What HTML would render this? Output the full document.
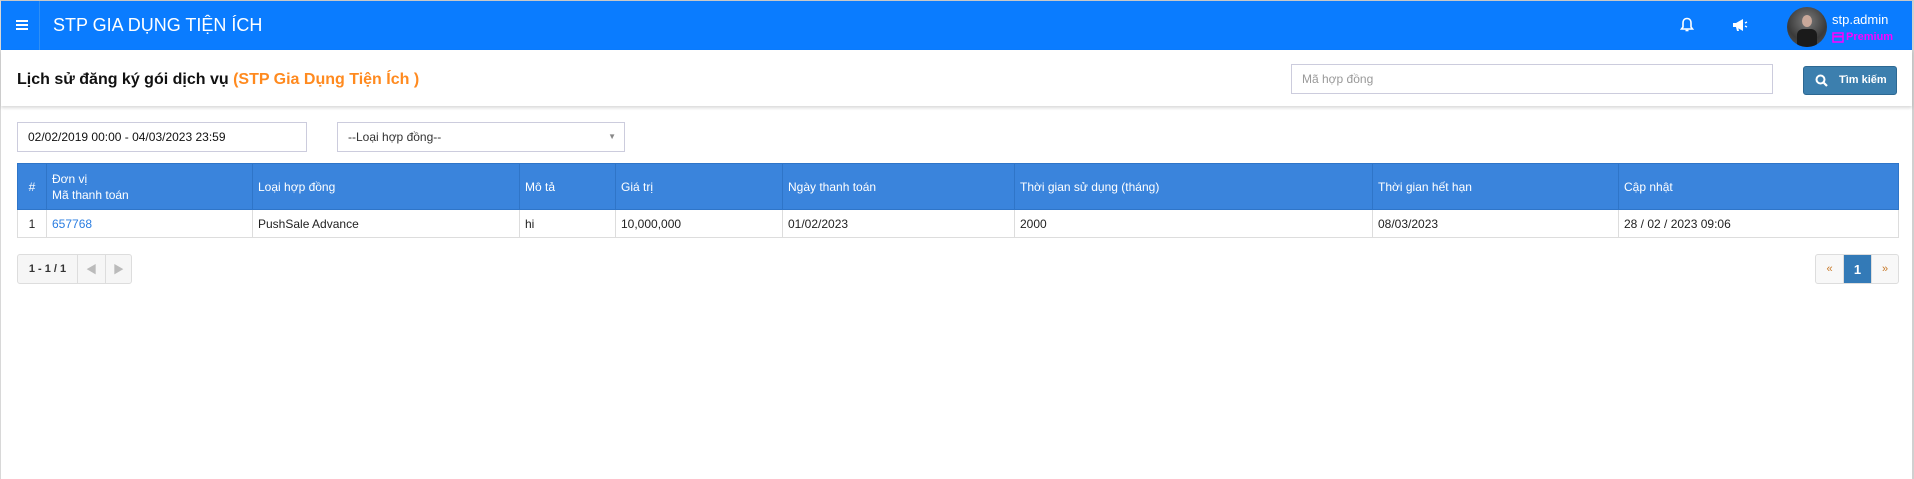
<!DOCTYPE html>
<html><head><meta charset="utf-8">
<style>
*{box-sizing:border-box;margin:0;padding:0}
body{width:1914px;height:479px;overflow:hidden;background:#fff;font-family:"Liberation Sans","Noto Sans CJK SC",sans-serif;font-size:12px;color:#222;position:relative;border-left:1px solid #d8d8d8;border-right:2px solid #d0d0d0;border-top:1px solid #c8c8c8}
.hdr{position:absolute;left:0;top:0;width:100%;height:49px;background:#0a7cff;color:#fff}
.abs{position:absolute}
.title{left:52px;top:14px;font-size:18px;color:#fff}
.div{left:38px;top:0;width:1px;height:49px;background:#2f8ff5}
.sec{position:absolute;left:0;top:49px;width:100%;height:56px;background:#fff;box-shadow:0 2px 3px rgba(0,0,0,.15)}
.inp{position:absolute;border:1px solid #ccd;background:#fff;font-size:12px;padding-left:10px;line-height:28px}
table{position:absolute;left:16px;top:162px;width:1882px;border-collapse:collapse;font-size:12px}
th{background:#3a84dc;color:#fff;font-weight:normal;text-align:left;height:46px;padding:0 5px;border:1px solid #2f75c8;line-height:16px}
td{height:28px;padding:0 5px;border:1px solid #ddd}
.pg{position:absolute;border:1px solid #ddd;border-radius:3px;background:#f6f6f6;height:30px;display:flex;font-size:11px}
.pg div{display:flex;align-items:center;justify-content:center;border-right:1px solid #ddd;color:#bbb}
.pg div:last-child{border-right:none}
</style></head><body>
<div class="hdr">
 <div class="abs" style="left:15px;top:19px;width:12px;height:2px;background:#fff;box-shadow:0 4px 0 #fff,0 8px 0 #fff"></div>
 <div class="abs div"></div>
 <div class="abs title">STP GIA DỤNG TIỆN ÍCH</div>
 <svg class="abs" style="left:1679px;top:16px" width="14" height="16" viewBox="0 0 14 16"><path d="M7 1.5c-2.6 0-4 2-4 4.5v4L1.5 12h11L11 10V6C11 3.5 9.6 1.5 7 1.5z" fill="none" stroke="#fff" stroke-width="1.6"/><path d="M5.5 13.5h3" stroke="#fff" stroke-width="1.6"/></svg>
 <svg class="abs" style="left:1731px;top:17px" width="16" height="14" viewBox="0 0 16 14"><path d="M1 5h3l7-4v12L4 9H1z" fill="#fff"/><path d="M4 9l1 4h2l-1-4" fill="#fff"/><path d="M13 5l2-1M13 8l2 1" stroke="#fff" stroke-width="1.3"/></svg>
 <div class="abs" style="left:1786px;top:6px;width:40px;height:40px;border-radius:50%;background:radial-gradient(circle at 50% 35%,#7a7a7a,#3a3a3a 60%,#555);overflow:hidden">
  <div class="abs" style="left:15px;top:8px;width:10px;height:12px;border-radius:50%;background:#c9a89a"></div>
  <div class="abs" style="left:10px;top:22px;width:20px;height:20px;background:#1a1a1a;border-radius:6px 6px 0 0"></div>
 </div>
 <div class="abs" style="left:1831px;top:11px;font-size:13px;color:#fff">stp.admin</div>
 <svg class="abs" style="left:1831px;top:31px" width="12" height="11" viewBox="0 0 12 11"><rect x="1" y="1" width="10" height="9" fill="none" stroke="#f0f" stroke-width="1.5"/><rect x="1" y="3.5" width="10" height="2" fill="#f0f"/></svg>
 <div class="abs" style="left:1845px;top:30px;font-size:11px;color:#f0f;font-weight:bold">Premium</div>
</div>
<div class="sec">
 <div class="abs" style="left:16px;top:21px;font-size:16px;font-weight:bold;color:#111">Lịch sử đăng ký gói dịch vụ <span style="color:#ff8a1f">(STP Gia Dụng Tiện Ích )</span></div>
 <div class="inp" style="left:1290px;top:14px;width:482px;height:30px;color:#999">Mã hợp đồng</div>
 <div class="abs" style="left:1802px;top:16px;width:94px;height:29px;background:#3c7fae;border:1px solid #2d6892;border-radius:3px;color:#fff;font-weight:bold;font-size:11px;line-height:27px;padding-left:35px">Tìm kiếm</div>
 <svg class="abs" style="left:1814px;top:24px" width="13" height="13" viewBox="0 0 13 13"><circle cx="5.5" cy="5.5" r="4" fill="none" stroke="#fff" stroke-width="2"/><path d="M8.5 8.5l3.5 3.5" stroke="#fff" stroke-width="2.2"/></svg>
</div>
<div class="inp" style="left:16px;top:121px;width:290px;height:30px;color:#111">02/02/2019 00:00 - 04/03/2023 23:59</div>
<div class="inp" style="left:336px;top:121px;width:288px;height:30px;color:#333">--Loại hợp đồng--<span style="position:absolute;right:8px;top:0;font-size:8px;color:#888">▼</span></div>
<table>
<tr><th style="width:29px;text-align:center">#</th><th style="width:206px">Đơn vị<br>Mã thanh toán</th><th style="width:267px">Loại hợp đồng</th><th style="width:96px">Mô tả</th><th style="width:167px">Giá trị</th><th style="width:232px">Ngày thanh toán</th><th style="width:358px">Thời gian sử dụng (tháng)</th><th style="width:246px">Thời gian hết hạn</th><th>Cập nhật</th></tr>
<tr><td style="text-align:center">1</td><td style="color:#2a7de1">657768</td><td>PushSale Advance</td><td>hi</td><td>10,000,000</td><td>01/02/2023</td><td>2000</td><td>08/03/2023</td><td>28 / 02 / 2023 09:06</td></tr>
</table>
<div class="pg" style="left:16px;top:253px;width:115px">
 <div style="width:60px;color:#333;font-weight:bold">1 - 1 / 1</div><div style="width:28px">◀</div><div style="flex:1">▶</div>
</div>
<div class="pg" style="left:1814px;top:253px;width:84px;background:#f8f8f8">
 <div style="width:28px;color:#c87a2a">«</div><div style="width:28px;background:#337ab7;color:#fff;font-size:13px;font-weight:bold">1</div><div style="flex:1;color:#c87a2a">»</div>
</div>
</body></html>
